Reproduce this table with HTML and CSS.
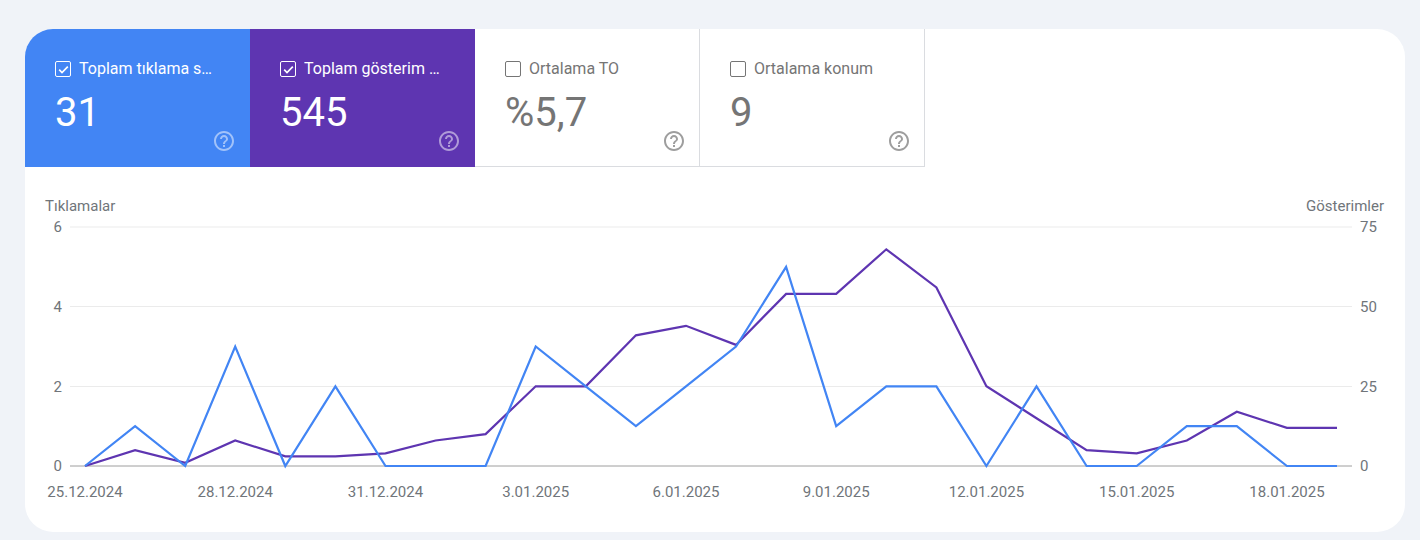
FILE: index.html
```html
<!DOCTYPE html>
<html lang="tr">
<head>
<meta charset="utf-8">
<title>Performans</title>
<link rel="stylesheet" href="styles.css">
</head>
<body>
<div class="card">
  <div class="tiles">
    <div class="tile tile-clicks">
      <div class="tile-label"><span class="cb cb-on"><svg viewBox="0 0 16 16"><path d="M3.4 8.2l3 3 6.2-6.2" fill="none" stroke="#fff" stroke-width="1.8"/></svg></span><span class="tile-text">Toplam tıklama sayısı</span></div>
      <div class="tile-value">31</div>
      <div class="tile-help"><svg viewBox="0 0 24 24"><path d="M11 18h2v-2h-2v2zm1-16C6.480 2 2 6.48 2 12s4.48 10 10 10 10-4.48 10-10S17.52 2 12 2zm0 18c-4.41 0-8-3.59-8-8s3.59-8 8-8 8 3.59 8 8-3.59 8-8 8zm0-14c-2.21 0-4 1.79-4 4h2c0-1.1.9-2 2-2s2 .9 2 2c0 2-3 1.75-3 5h2c0-2.25 3-2.5 3-5 0-2.21-1.79-4-4-4z"/></svg></div>
    </div>
    <div class="tile tile-impr">
      <div class="tile-label"><span class="cb cb-on"><svg viewBox="0 0 16 16"><path d="M3.4 8.2l3 3 6.2-6.2" fill="none" stroke="#fff" stroke-width="1.8"/></svg></span><span class="tile-text">Toplam gösterim sayısı</span></div>
      <div class="tile-value">545</div>
      <div class="tile-help"><svg viewBox="0 0 24 24"><path d="M11 18h2v-2h-2v2zm1-16C6.48 2 2 6.48 2 12s4.48 10 10 10 10-4.48 10-10S17.52 2 12 2zm0 18c-4.41 0-8-3.59-8-8s3.59-8 8-8 8 3.59 8 8-3.59 8-8 8zm0-14c-2.21 0-4 1.79-4 4h2c0-1.1.9-2 2-2s2 .9 2 2c0 2-3 1.75-3 5h2c0-2.25 3-2.5 3-5 0-2.21-1.79-4-4-4z"/></svg></div>
    </div>
    <div class="tile tile-off">
      <div class="tile-label"><span class="cb"></span><span class="tile-text">Ortalama TO</span></div>
      <div class="tile-value">%5,7</div>
      <div class="tile-help"><svg viewBox="0 0 24 24"><path d="M11 18h2v-2h-2v2zm1-16C6.48 2 2 6.48 2 12s4.48 10 10 10 10-4.48 10-10S17.52 2 12 2zm0 18c-4.41 0-8-3.59-8-8s3.59-8 8-8 8 3.59 8 8-3.59 8-8 8zm0-14c-2.21 0-4 1.79-4 4h2c0-1.1.9-2 2-2s2 .9 2 2c0 2-3 1.75-3 5h2c0-2.25 3-2.5 3-5 0-2.21-1.79-4-4-4z"/></svg></div>
    </div>
    <div class="tile tile-off">
      <div class="tile-label"><span class="cb"></span><span class="tile-text">Ortalama konum</span></div>
      <div class="tile-value">9</div>
      <div class="tile-help"><svg viewBox="0 0 24 24"><path d="M11 18h2v-2h-2v2zm1-16C6.48 2 2 6.48 2 12s4.48 10 10 10 10-4.48 10-10S17.52 2 12 2zm0 18c-4.41 0-8-3.59-8-8s3.59-8 8-8 8 3.59 8 8-3.59 8-8 8zm0-14c-2.21 0-4 1.79-4 4h2c0-1.1.9-2 2-2s2 .9 2 2c0 2-3 1.75-3 5h2c0-2.25 3-2.5 3-5 0-2.21-1.79-4-4-4z"/></svg></div>
    </div>
  </div>
  <div class="chart">
    <svg class="chart-svg" viewBox="0 0 1380 365" width="1380" height="365">
      <g class="grid">
        <line x1="45" y1="60" x2="1327" y2="60"/>
        <line x1="45" y1="139.5" x2="1327" y2="139.5"/>
        <line x1="45" y1="219.5" x2="1327" y2="219.5"/>
      </g>
      <line class="zero" x1="45" y1="299" x2="1327" y2="299"/>
      <g class="axis-text">
        <text x="20" y="44">Tıklamalar</text>
        <text x="1359" y="44" text-anchor="end">Gösterimler</text>
        <text x="37" y="65" text-anchor="end">6</text>
        <text x="37" y="144.5" text-anchor="end">4</text>
        <text x="37" y="224.5" text-anchor="end">2</text>
        <text x="37" y="304" text-anchor="end">0</text>
        <text x="1335" y="65">75</text>
        <text x="1335" y="144.5">50</text>
        <text x="1335" y="224.5">25</text>
        <text x="1335" y="304">0</text>
        <g text-anchor="middle">
          <text x="60" y="330">25.12.2024</text>
          <text x="210.2" y="330">28.12.2024</text>
          <text x="360.5" y="330">31.12.2024</text>
          <text x="510.7" y="330">3.01.2025</text>
          <text x="661" y="330">6.01.2025</text>
          <text x="811.2" y="330">9.01.2025</text>
          <text x="961.4" y="330">12.01.2025</text>
          <text x="1111.7" y="330">15.01.2025</text>
          <text x="1262" y="330">18.01.2025</text>
        </g>
      </g>
      <polyline class="line-impr" points="60,299 110.1,283.1 160.2,295.8 210.2,273.5 260.3,289.4 310.4,289.4 360.5,286.3 410.6,273.5 460.6,267.1 510.7,219.3 560.8,219.3 610.9,168.3 661,158.8 711,177.9 761.1,126.9 811.2,126.9 861.3,82.3 911.4,120.5 961.4,219.3 1011.5,251.2 1061.6,283.1 1111.7,286.3 1161.8,273.5 1211.8,244.8 1261.9,260.8 1312,260.8"/>
      <polyline class="line-clicks" points="60,299 110.1,259.2 160.2,299 210.2,179.5 260.3,299 310.4,219.3 360.5,299 410.6,299 460.6,299 510.7,179.5 560.8,219.3 610.9,259.2 661,219.3 711,179.5 761.1,99.8 811.2,259.2 861.3,219.3 911.4,219.3 961.4,299 1011.5,219.3 1061.6,299 1111.7,299 1161.8,259.2 1211.8,259.2 1261.9,299 1312,299"/>
    </svg>
  </div>
</div>
</body>
</html>
```

FILE: styles.css
```css
* { box-sizing: border-box; }

html, body {
  margin: 0;
  padding: 0;
}

body {
  background: #f0f3f8;
  font-family: Roboto, "Noto Sans", "Liberation Sans", Arial, sans-serif;
  padding: 29px 15px 0 25px;
}

.card {
  width: 1380px;
  height: 503px;
  background: #ffffff;
  border-radius: 28px;
  overflow: hidden;
}

.tiles {
  display: flex;
}

.tile {
  width: 225px;
  height: 138px;
  padding: 30px 14px 14px 30px;
  display: flex;
  flex-direction: column;
}

.tile-clicks {
  background: #4285f4;
  color: #ffffff;
}

.tile-impr {
  background: #5e35b1;
  color: #ffffff;
}

.tile-off {
  background: #ffffff;
  color: #757575;
  border-right: 1px solid #dadce0;
  border-bottom: 1px solid #dadce0;
  padding-right: 13px;
}

.tile-label {
  display: flex;
  align-items: center;
  gap: 8px;
  height: 20px;
  font-size: 16px;
  line-height: 20px;
  padding-right: 20px;
}

.tile-text {
  white-space: nowrap;
  overflow: hidden;
  text-overflow: ellipsis;
  min-width: 0;
}

.cb {
  flex: 0 0 16px;
  width: 16px;
  height: 16px;
  border: 1.6px solid #757575;
  border-radius: 2px;
  display: flex;
  align-items: center;
  justify-content: center;
}

.cb-on {
  border-color: #ffffff;
}

.cb svg {
  width: 15px;
  height: 15px;
  display: block;
  flex: 0 0 15px;
}

.tile-value {
  margin-top: 10px;
  font-size: 40px;
  line-height: 48px;
}

.tile-help {
  margin-top: -8px;
  align-self: flex-end;
  width: 24px;
  height: 24px;
}

.tile-help svg {
  width: 24px;
  height: 24px;
  display: block;
}

.tile-clicks .tile-help svg,
.tile-impr .tile-help svg {
  fill: rgba(255, 255, 255, 0.5);
}

.tile-off .tile-help svg {
  fill: #9e9e9e;
}

.chart-svg {
  display: block;
}

.grid line {
  stroke: #ebebeb;
  stroke-width: 1;
}

.zero {
  stroke: #9e9e9e;
  stroke-width: 1;
}

.axis-text text {
  font-family: Roboto, "Noto Sans", "Liberation Sans", Arial, sans-serif;
  font-size: 15px;
  fill: #70757a;
}

.line-impr,
.line-clicks {
  fill: none;
  stroke-width: 2.2;
  stroke-linejoin: miter;
}

.line-impr {
  stroke: #5e35b1;
}

.line-clicks {
  stroke: #4285f4;
}
```
